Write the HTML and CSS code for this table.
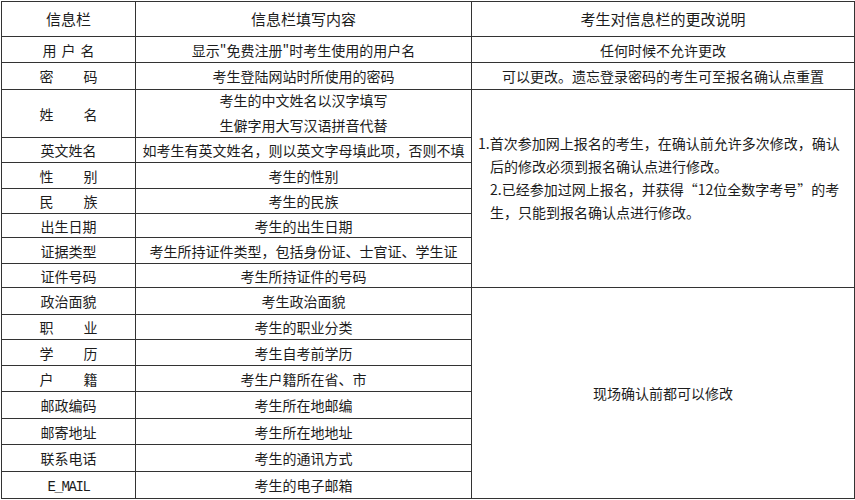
FILE: index.html
```html
<!DOCTYPE html>
<html lang="zh-CN">
<head>
<meta charset="utf-8">
<title>信息栏说明</title>
<link rel="stylesheet" href="styles.css">
</head>
<body>
<table class="info">
  <colgroup>
    <col class="c1">
    <col class="c2">
    <col class="c3">
  </colgroup>
  <thead>
    <tr class="h35">
      <th>信息栏</th>
      <th>信息栏填写内容</th>
      <th>考生对信息栏的更改说明</th>
    </tr>
  </thead>
  <tbody>
    <tr class="h26">
      <td><span class="spread s3">用户名</span></td>
      <td>显示"免费注册"时考生使用的用户名</td>
      <td>任何时候不允许更改</td>
    </tr>
    <tr class="h27">
      <td><span class="spread">密码</span></td>
      <td>考生登陆网站时所使用的密码</td>
      <td>可以更改。遗忘登录密码的考生可至报名确认点重置</td>
    </tr>
    <tr class="h48">
      <td><span class="spread">姓名</span></td>
      <td><div class="two">考生的中文姓名以汉字填写<br>生僻字用大写汉语拼音代替</div></td>
      <td rowspan="7" class="notes">
        <p class="n1">1.首次参加网上报名的考生，在确认前允许多次修改，确认<br>后的修改必须到报名确认点进行修改。</p>
        <p>2.已经参加过网上报名，并获得“12位全数字考号”的考<br>生，只能到报名确认点进行修改。</p>
      </td>
    </tr>
    <tr class="h25">
      <td>英文姓名</td>
      <td>如考生有英文姓名，则以英文字母填此项，否则不填</td>
    </tr>
    <tr class="h26">
      <td><span class="spread">性别</span></td>
      <td>考生的性别</td>
    </tr>
    <tr class="h25">
      <td><span class="spread">民族</span></td>
      <td>考生的民族</td>
    </tr>
    <tr class="h24">
      <td>出生日期</td>
      <td>考生的出生日期</td>
    </tr>
    <tr class="h26">
      <td>证据类型</td>
      <td>考生所持证件类型，包括身份证、士官证、学生证</td>
    </tr>
    <tr class="h24">
      <td>证件号码</td>
      <td>考生所持证件的号码</td>
    </tr>
    <tr class="h27">
      <td>政治面貌</td>
      <td>考生政治面貌</td>
      <td rowspan="8" class="mid">现场确认前都可以修改</td>
    </tr>
    <tr class="h25">
      <td><span class="spread">职业</span></td>
      <td>考生的职业分类</td>
    </tr>
    <tr class="h26">
      <td><span class="spread">学历</span></td>
      <td>考生自考前学历</td>
    </tr>
    <tr class="h26">
      <td><span class="spread">户籍</span></td>
      <td>考生户籍所在省、市</td>
    </tr>
    <tr class="h27">
      <td>邮政编码</td>
      <td>考生所在地邮编</td>
    </tr>
    <tr class="h26">
      <td>邮寄地址</td>
      <td>考生所在地地址</td>
    </tr>
    <tr class="h27">
      <td>联系电话</td>
      <td>考生的通讯方式</td>
    </tr>
    <tr class="h27">
      <td><span class="mono">E_MAIL</span></td>
      <td>考生的电子邮箱</td>
    </tr>
  </tbody>
</table>
</body>
</html>
```

FILE: styles.css
```css
html, body {
  margin: 0;
  padding: 0;
  background: #ffffff;
}

body {
  font-family: "Noto Sans CJK SC", "Liberation Sans", sans-serif;
  font-size: 14px;
  color: #1c1c1c;
}

.info {
  border-collapse: collapse;
  table-layout: fixed;
  width: 853px;
  margin: 1px 0 0 1px;
}

.c1 { width: 134px; }
.c2 { width: 336px; }
.c3 { width: 383px; }

.info th,
.info td {
  border: 1px solid #333333;
  padding: 0;
  text-align: center;
  vertical-align: middle;
  line-height: 18px;
  white-space: nowrap;
  overflow: hidden;
}

.info th {
  font-weight: normal;
  font-size: 15px;
}

.h24 { height: 24px; }
.h25 { height: 25px; }
.h26 { height: 26px; }
.h27 { height: 27px; }
.h35 { height: 35px; }
.h48 { height: 48px; }

.spread {
  display: inline-block;
  width: 58px;
  text-align: justify;
  text-align-last: justify;
  vertical-align: top;
}

.spread.s3 {
  width: 52px;
}

.mono {
  font-family: "Liberation Mono", monospace;
  font-size: 14px;
  line-height: 16px;
  letter-spacing: -1.4px;
}

.two {
  height: 45px;
  line-height: 25px;
  margin: -3px 0 3px;
}

.info td.notes {
  vertical-align: top;
  text-align: left;
  padding: 42px 0 0 18px;
  line-height: 23px;
}

.notes p {
  margin: 0;
  white-space: nowrap;
}

.notes p.n1 {
  text-indent: -12px;
}

.info td.mid {
  text-align: center;
}
```
